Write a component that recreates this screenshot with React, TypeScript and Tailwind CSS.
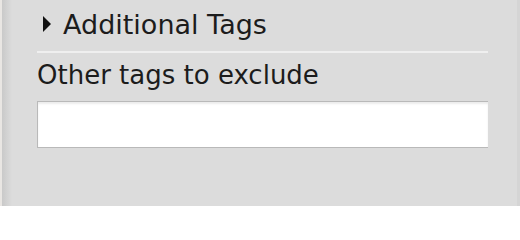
export default function App() {
  return (
    <div className="flex h-[206px] w-[520px] overflow-hidden bg-[#dcdcdc] font-['DejaVu_Sans',sans-serif] text-[#1c1c1c]">
      <div className="w-[2px] shrink-0 bg-[#e9e6e3]" />
      <div className="w-[10px] shrink-0 bg-gradient-to-r from-[#c9c9c9] to-[#dcdcdc]" />
      <div className="flex min-w-0 flex-1 flex-col pl-[25px] pr-[29px]">
        <button className="flex h-[51px] items-center gap-[12px] pl-[6px] pb-[3px] text-left">
          <span className="h-0 w-0 border-y-[8px] border-l-[8px] border-y-transparent border-l-[#111]" />
          <span className="text-[27px] leading-none">Additional Tags</span>
        </button>
        <div className="h-[2px] bg-[#efefef]" />
        <label className="mt-[5px] text-[26px] leading-[34px]">Other tags to exclude</label>
        <input
          type="text"
          className="mt-[9px] h-[47px] w-full border border-r-0 border-[#b9b9b9] bg-white shadow-[inset_0_2px_2px_rgba(0,0,0,0.08)] outline-none"
        />
      </div>
      <div className="w-[3px] shrink-0 bg-[#d5d5d5]" />
    </div>
  );
}
